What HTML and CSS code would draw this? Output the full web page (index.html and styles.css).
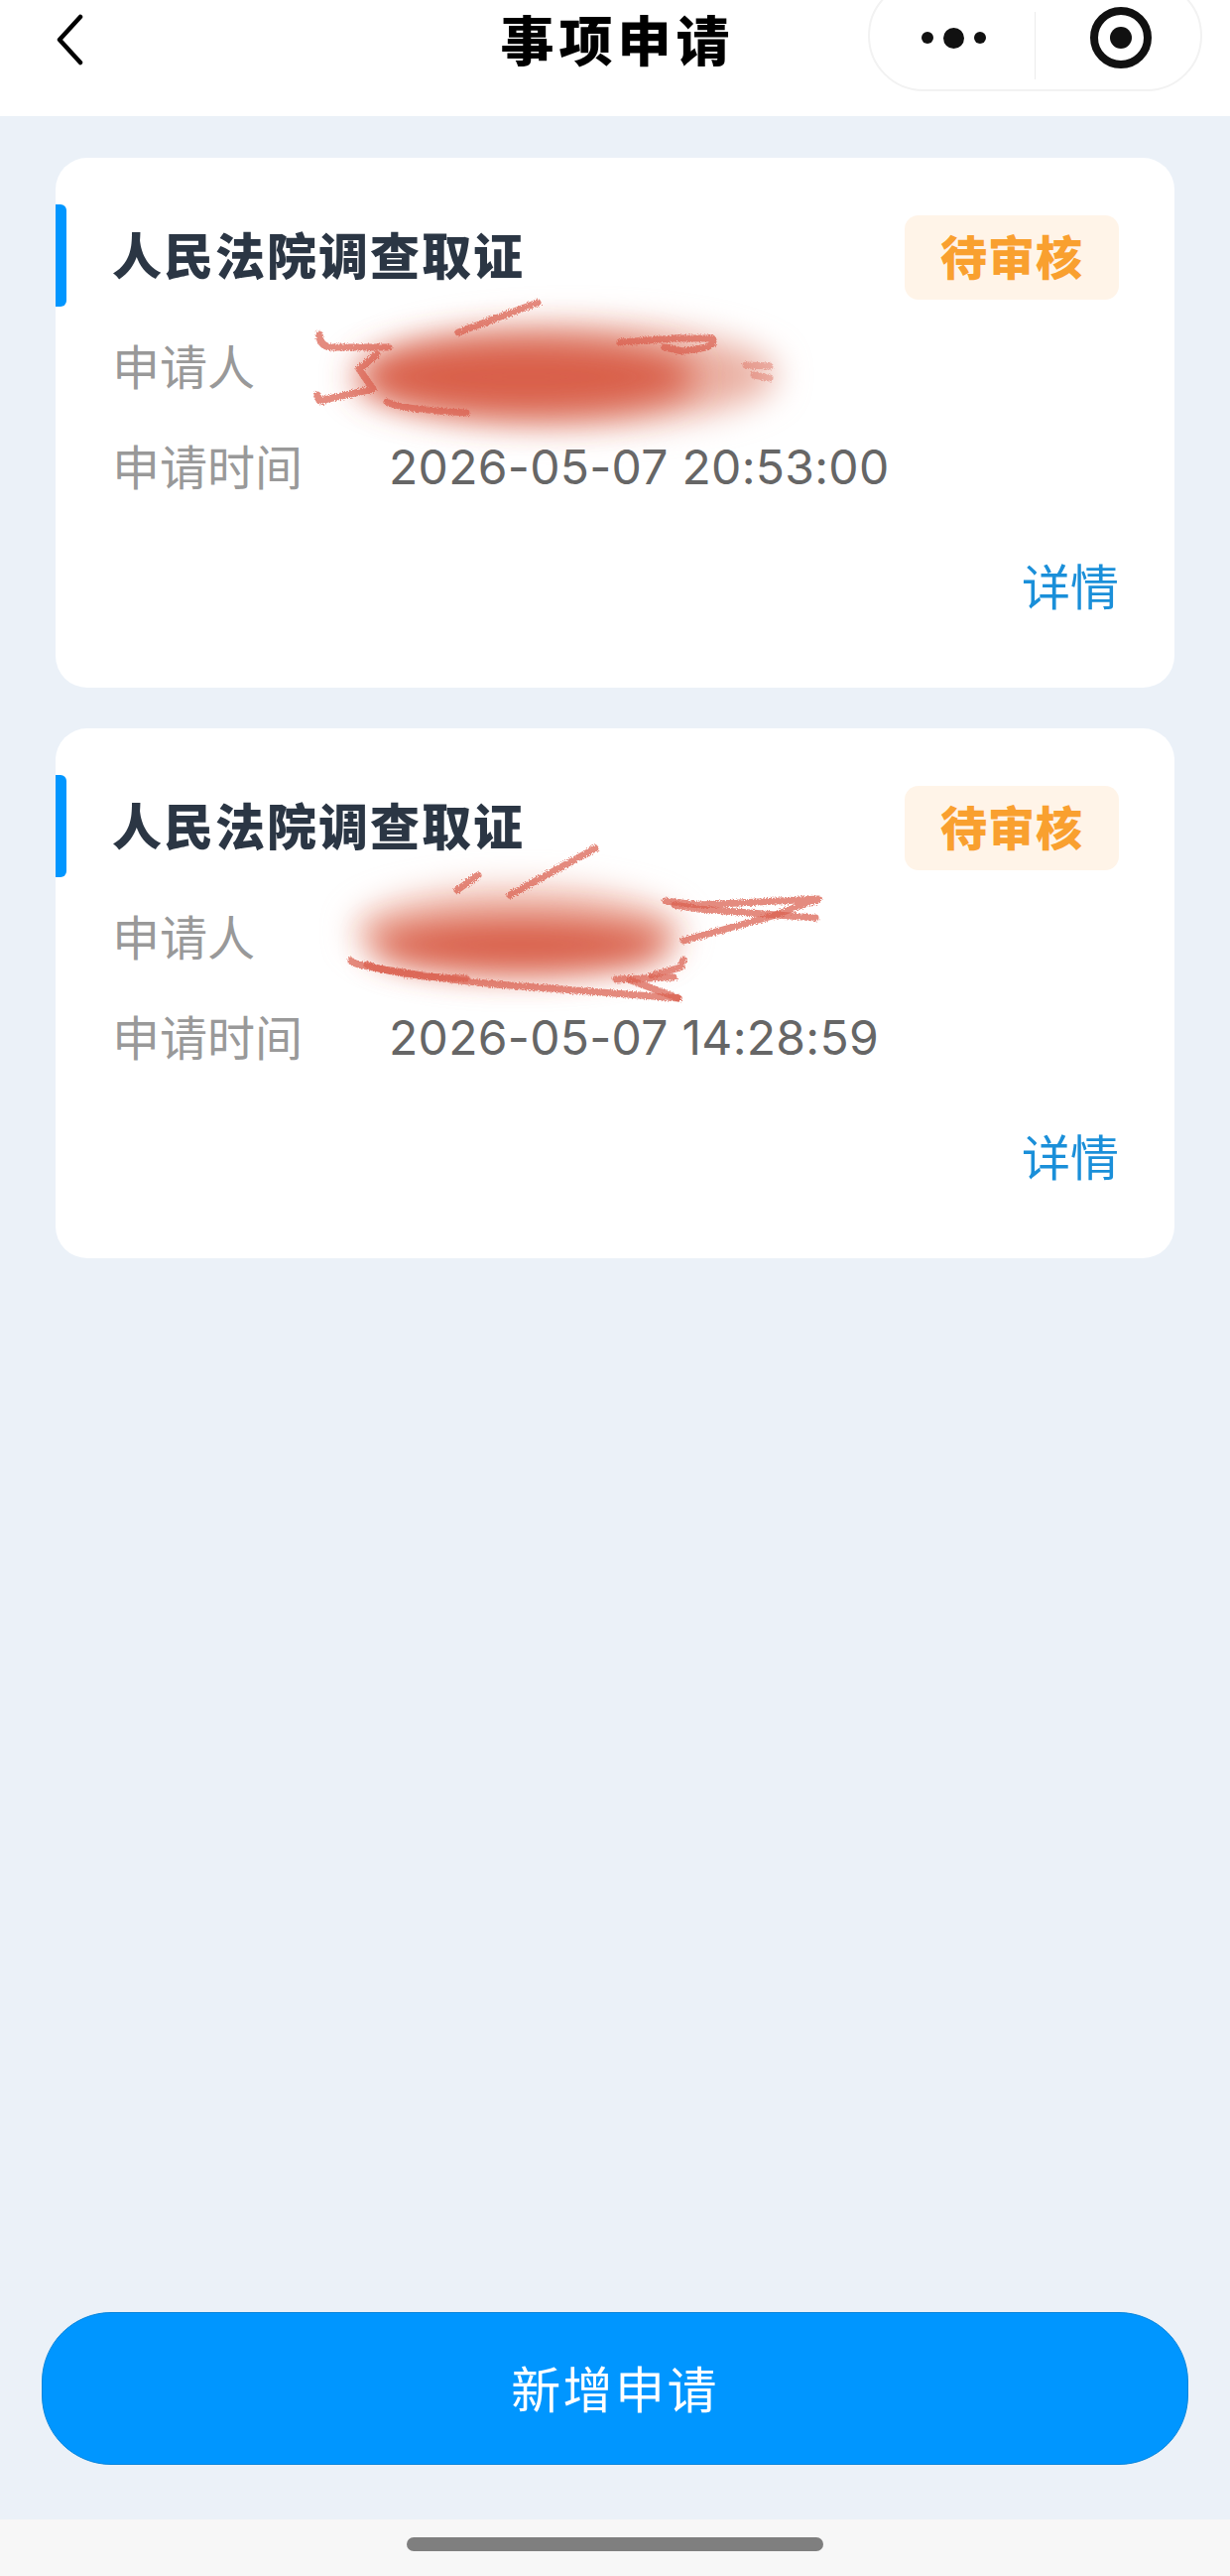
FILE: index.html
```html
<!DOCTYPE html>
<html lang="zh-CN">
<head>
    <meta charset="UTF-8">
    <meta name="viewport" content="width=device-width, initial-scale=1.0">
    <title>事项申请</title>
    <link rel="stylesheet" href="styles.css">
</head>
<body>
    <div class="page">
        <div class="header">
            <div class="back">
                <svg width="30" height="52" viewBox="0 0 30 52"><path d="M26 3 L5 26 L26 49" fill="none" stroke="#000" stroke-width="4.5" stroke-linecap="round" stroke-linejoin="round"/></svg>
            </div>
            <h1 class="page-title">事项申请</h1>
            <div class="capsule">
                <div class="capsule-more">
                    <span class="dot"></span>
                    <span class="dot dot-big"></span>
                    <span class="dot"></span>
                </div>
                <div class="capsule-line"></div>
                <div class="capsule-close">
                    <svg width="64" height="64" viewBox="0 0 64 64"><circle cx="32" cy="32" r="27" fill="none" stroke="#111" stroke-width="8"/><circle cx="32" cy="32" r="11" fill="#111"/></svg>
                </div>
            </div>
        </div>

        <div class="main-content">
            <div class="card">
                <div class="card-head">
                    <div class="card-title">人民法院调查取证</div>
                    <div class="tag">待审核</div>
                </div>
                <div class="row row-first"><span class="row-label">申请人</span></div>
                <div class="row"><span class="row-label">申请时间</span><span class="row-value">2026-05-07 20:53:00</span></div>
                <div class="card-foot">详情</div>
                <!-- hand scribble over the name -->
                <svg class="scribble" viewBox="56 159 1128 534">
                    <defs>
                        <filter id="soft1" x="-30%" y="-80%" width="160%" height="260%"><feGaussianBlur stdDeviation="17"/></filter>
                        <filter id="rough1" x="-5%" y="-10%" width="110%" height="120%">
                            <feTurbulence type="fractalNoise" baseFrequency="0.8" numOctaves="2" result="n"/>
                            <feDisplacementMap in="SourceGraphic" in2="n" scale="5"/>
                        </filter>
                    </defs>
                    <ellipse cx="578" cy="378" rx="205" ry="50" fill="#eab0a3" filter="url(#soft1)"/>
                    <ellipse cx="530" cy="380" rx="172" ry="38" fill="#d95f4a" filter="url(#soft1)"/>
                    <g class="scribble-lines" filter="url(#rough1)">
                        <path d="M322 337 Q322 350 336 350 L392 350"/>
                        <path d="M380 357 L362 372 L376 392 L322 404 L320 398"/>
                        <path d="M390 405 Q400 412 470 416"/>
                        <path d="M542 305 L462 335"/>
                        <path d="M625 345 L680 341 L718 341 Q722 346 712 350 L688 354 L670 350"/>
                        <path class="faint" d="M752 368 L776 369 M760 378 L776 381"/>
                    </g>
                </svg>
            </div>

            <div class="card">
                <div class="card-head">
                    <div class="card-title">人民法院调查取证</div>
                    <div class="tag">待审核</div>
                </div>
                <div class="row row-first"><span class="row-label">申请人</span></div>
                <div class="row"><span class="row-label">申请时间</span><span class="row-value">2026-05-07 14:28:59</span></div>
                <div class="card-foot">详情</div>
                <svg class="scribble" viewBox="56 734 1128 534">
                    <defs>
                        <filter id="soft2" x="-30%" y="-80%" width="160%" height="260%"><feGaussianBlur stdDeviation="16"/></filter>
                        <filter id="rough2" x="-5%" y="-10%" width="110%" height="120%">
                            <feTurbulence type="fractalNoise" baseFrequency="0.8" numOctaves="2" result="n"/>
                            <feDisplacementMap in="SourceGraphic" in2="n" scale="5"/>
                        </filter>
                    </defs>
                    <ellipse cx="522" cy="938" rx="165" ry="44" fill="#efb9ac" filter="url(#soft2)"/>
                    <ellipse cx="525" cy="952" rx="150" ry="26" fill="#d9604c" filter="url(#soft2)"/>
                    <g class="scribble-lines" filter="url(#rough2)">
                        <path d="M600 855 L514 902"/>
                        <path d="M482 882 L461 897"/>
                        <path d="M671 908 L704 912 L825 906 L779 923 L689 948"/>
                        <path d="M680 912 L704 916 L822 925"/>
                        <path d="M354 968 Q352 972 407 980 Q470 990 514 993 L684 1006"/>
                        <path d="M370 972 Q400 984 470 986"/>
                        <path d="M689 967 L686 975 L657 983"/>
                        <path d="M679 985 L621 987"/>
                        <path d="M636 988 L684 1006"/>
                    </g>
                </svg>
            </div>
        </div>

        <div class="bottom-action">
            <div class="add-btn">新增申请</div>
        </div>
        <div class="home-bar"><div class="home-pill"></div></div>
    </div>
</body>
</html>
```

FILE: styles.css
```css
* { box-sizing: border-box; }
html, body { margin: 0; padding: 0; }
body { font-family: "Noto Sans CJK SC", "Noto Sans", sans-serif; background-color: #ebf1f8; overflow: hidden; }
.page { width: 1240px; height: 2596px; display: flex; flex-direction: column; }

.header { height: 117px; background-color: #fff; display: grid; grid-template-columns: 1fr auto 1fr; align-items: start; overflow: hidden; flex-shrink: 0; }
.back { padding: 14px 0 0 55px; }
.page-title { margin: 8px -5px 0 0; font-size: 54px; line-height: 62px; font-weight: 900; letter-spacing: 5px; color: #000; }
.capsule { justify-self: end; width: 337px; height: 112px; margin: -20px 28px 0 0; border: 2px solid #f2f2f2; border-radius: 56px; display: flex; align-items: center; padding-top: 4px; }
.capsule-more { width: 166px; display: flex; justify-content: center; align-items: center; gap: 6px; padding-left: 2px; }
.dot { width: 12px; height: 12px; background-color: #111; border-radius: 50%; margin: 0 2px; }
.dot-big { width: 21px; height: 21px; }
.capsule-line { width: 1px; height: 68px; background-color: #ececec; margin-top: 16px; }
.capsule-close { flex: 1; display: flex; justify-content: center; padding-left: 6px; }

.main-content { flex: 1; padding: 42px 56px 0; display: flex; flex-direction: column; gap: 41px; }
.card { position: relative; background-color: #fff; border-radius: 32px; padding: 58px 56px 74px 57px; }
.card::before { content: ""; position: absolute; left: 0; top: 47px; width: 11px; height: 103px; background-color: #0096ff; border-radius: 0 6px 6px 0; }
.card-head { display: flex; justify-content: space-between; align-items: center; }
.card-title { font-size: 50px; line-height: 70px; font-weight: 900; letter-spacing: 2px; color: #2b3644; margin-top: -10px; }
.tag { width: 216px; height: 85px; background-color: #fff4e8; border-radius: 14px; color: #f9a02f; font-size: 47px; font-weight: 900; display: flex; justify-content: center; align-items: center; letter-spacing: 1px; padding-bottom: 6px; }
.row { display: flex; height: 60px; line-height: 60px; font-size: 48px; margin-top: 41px; }
.row-first { margin-top: 35px; }
.row-label { width: 279px; color: #999; }
.row-value { font-family: "Inter", "Noto Sans", sans-serif; font-size: 48px; letter-spacing: .3px; color: #666; position: relative; top: 3px; }
.card-foot { margin-top: 61px; height: 60px; line-height: 60px; text-align: right; font-size: 49px; color: #1a8fd9; }

.scribble { position: absolute; left: 0; top: 0; width: 100%; height: 100%; overflow: visible; pointer-events: none; }
.scribble-lines path { fill: none; stroke: #d9604f; stroke-width: 7; stroke-linecap: round; stroke-linejoin: round; opacity: .72; }
.scribble-lines path.faint { opacity: .4; }

.bottom-action { padding: 0 42px 55px; flex-shrink: 0; }
.add-btn { height: 154px; background-color: #0096ff; border: 1px solid #0a86dc; border-radius: 70px; color: #fff; font-size: 50px; display: flex; justify-content: center; align-items: center; letter-spacing: 2.4px; padding-bottom: 5px; }
.home-bar { height: 57px; background-color: #f7f7f7; padding-top: 18px; flex-shrink: 0; }
.home-pill { width: 420px; height: 14px; margin: 0 auto; background-color: #7f7f7f; border-radius: 7px; }
```
